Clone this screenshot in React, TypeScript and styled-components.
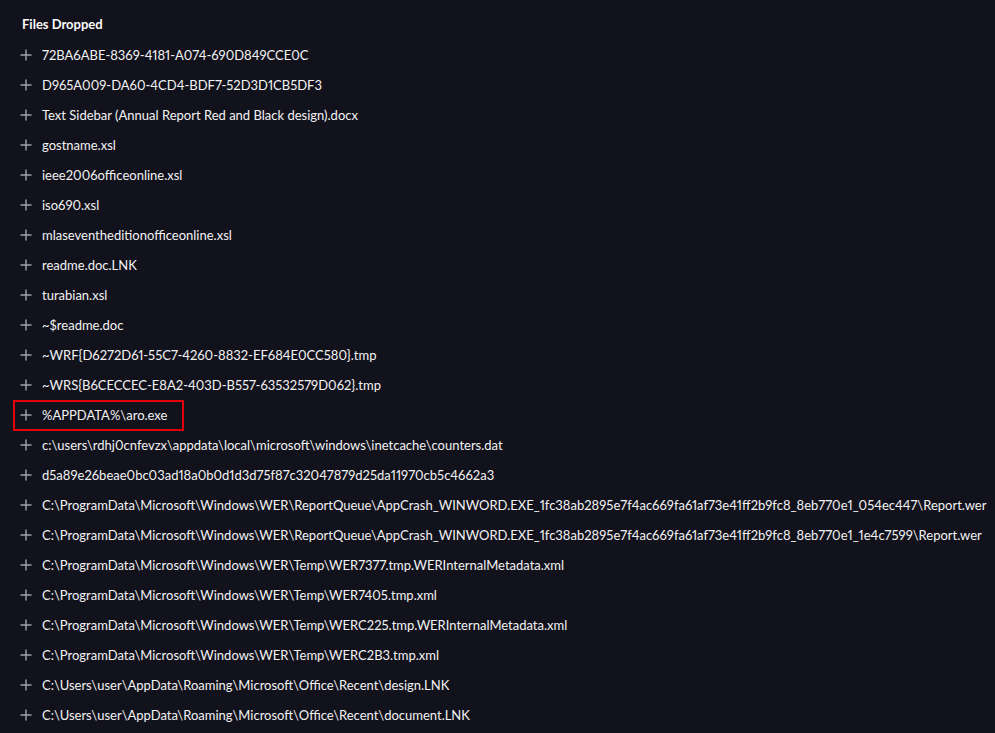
import React from "react";
import styled, { createGlobalStyle } from "styled-components";

const Global = createGlobalStyle`
  html, body { margin: 0; padding: 0; background: #12121c; }
  body { font-family: Lato, "Noto Sans", sans-serif; color: #f2f2f4; }
`;

const Page = styled.div`
  padding: 14px 0 0 0;
  min-height: 733px;
  box-sizing: border-box;
`;

const Title = styled.div`
  font-weight: 700;
  font-size: 13px;
  line-height: 20px;
  padding-left: 22px;
  margin-bottom: 6px;
  color: #fafafa;
`;

const List = styled.div`
  display: flex;
  flex-direction: column;
`;

const Row = styled.div`
  display: flex;
  align-items: center;
  gap: 10px;
  height: 30px;
  padding-left: 20px;
  font-size: 13px;
  font-variant-numeric: proportional-nums;
  font-feature-settings: "pnum" 1;
  white-space: nowrap;
  position: relative;
`;

const HighlightBox = styled.div`
  position: absolute;
  left: 13px;
  top: 0px;
  width: 171px;
  height: 31px;
  border: 2px solid #e3000b;
  box-sizing: border-box;
  pointer-events: none;
`;

const Plus = () => (
  <svg width="12" height="12" viewBox="0 0 12 12" style={{ flex: "none" }}>
    <path d="M6 0.5V11.5M0.5 6H11.5" stroke="#a3a3ab" strokeWidth="1.4" />
  </svg>
);

const items = [
  "72BA6ABE-8369-4181-A074-690D849CCE0C",
  "D965A009-DA60-4CD4-BDF7-52D3D1CB5DF3",
  "Text Sidebar (Annual Report Red and Black design).docx",
  "gostname.xsl",
  "ieee2006officeonline.xsl",
  "iso690.xsl",
  "mlaseventheditionofficeonline.xsl",
  "readme.doc.LNK",
  "turabian.xsl",
  "~$readme.doc",
  "~WRF{D6272D61-55C7-4260-8832-EF684E0CC580}.tmp",
  "~WRS{B6CECCEC-E8A2-403D-B557-63532579D062}.tmp",
  "%APPDATA%\\aro.exe",
  "c:\\users\\rdhj0cnfevzx\\appdata\\local\\microsoft\\windows\\inetcache\\counters.dat",
  "d5a89e26beae0bc03ad18a0b0d1d3d75f87c32047879d25da11970cb5c4662a3",
  "C:\\ProgramData\\Microsoft\\Windows\\WER\\ReportQueue\\AppCrash_WINWORD.EXE_1fc38ab2895e7f4ac669fa61af73e41ff2b9fc8_8eb770e1_054ec447\\Report.wer",
  "C:\\ProgramData\\Microsoft\\Windows\\WER\\ReportQueue\\AppCrash_WINWORD.EXE_1fc38ab2895e7f4ac669fa61af73e41ff2b9fc8_8eb770e1_1e4c7599\\Report.wer",
  "C:\\ProgramData\\Microsoft\\Windows\\WER\\Temp\\WER7377.tmp.WERInternalMetadata.xml",
  "C:\\ProgramData\\Microsoft\\Windows\\WER\\Temp\\WER7405.tmp.xml",
  "C:\\ProgramData\\Microsoft\\Windows\\WER\\Temp\\WERC225.tmp.WERInternalMetadata.xml",
  "C:\\ProgramData\\Microsoft\\Windows\\WER\\Temp\\WERC2B3.tmp.xml",
  "C:\\Users\\user\\AppData\\Roaming\\Microsoft\\Office\\Recent\\design.LNK",
  "C:\\Users\\user\\AppData\\Roaming\\Microsoft\\Office\\Recent\\document.LNK",
];

export default function App() {
  return (
    <>
      <Global />
      <Page>
        <Title>Files Dropped</Title>
        <List>
          {items.map((t, i) => (
            <Row key={i}>
              {t === "%APPDATA%\\aro.exe" && <HighlightBox />}
              <Plus />
              <span>{t}</span>
            </Row>
          ))}
        </List>
      </Page>
    </>
  );
}
